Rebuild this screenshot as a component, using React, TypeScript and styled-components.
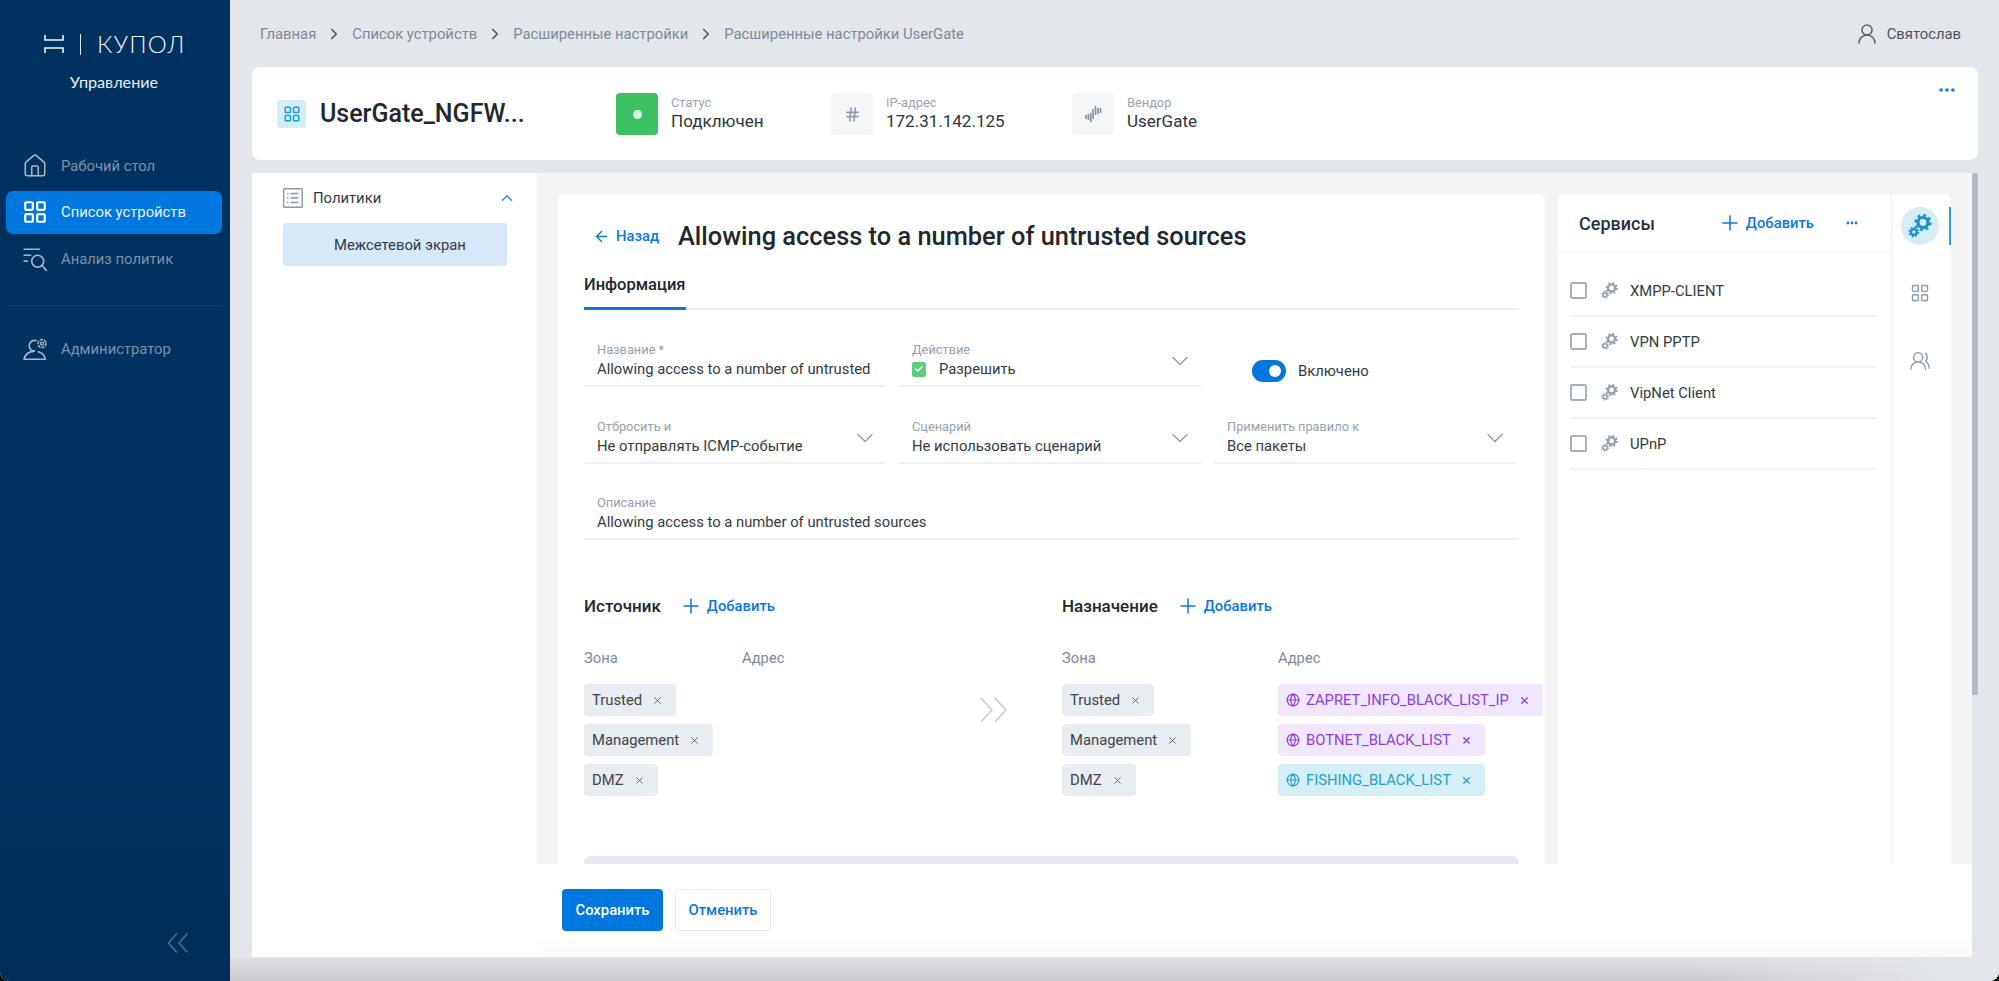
import React from "react";
import styled, { createGlobalStyle } from "styled-components";
import { ChevronDown, ChevronRight, ChevronUp, Check, Globe, Hash, House, LayoutGrid, ArrowLeft, Plus, Ellipsis, X, UserRound, UsersRound } from "lucide-react";

const Global = createGlobalStyle`
  html, body { margin: 0; padding: 0; background: #0b0b0d; }
  body { font-family: Roboto, "Noto Sans", sans-serif; overflow: hidden; }
  * { box-sizing: border-box; }
`;

const Frame = styled.div`
  width: 1999px; height: 981px; display: flex; overflow: hidden;
  border-radius: 0 0 9px 9px; background: #e3e6eb; color: #23282e;
`;
const Sidebar = styled.aside`
  width: 230px; flex: none; display: flex; flex-direction: column; padding: 0 8px 28px 6px;
  background: linear-gradient(#01325f 80%, #012e58);
`;
const LogoRow = styled.div`
  height: 22px; margin-top: 33px; display: flex; align-items: center; padding-left: 38px; color: #fff;
`;
const LogoBar = styled.span`
  width: 1px; height: 21px; background: #dfe6ee; margin: 0 16px;
`;
const LogoText = styled.span`
  font-family: Lato, sans-serif; font-weight: 300; font-size: 24px; letter-spacing: 1.2px; line-height: 22px; color: #f3f6f9;
`;
const LogoSub = styled.div`
  margin-top: 16px; margin-bottom: 51px; text-align: center; font-family: Lato, sans-serif; font-weight: 400; font-size: 16.2px; line-height: 22px; color: #e8edf2;
`;
const NavItem = styled.div<{ $active?: boolean }>`
  height: 43px; margin-bottom: 3.5px; display: flex; align-items: center; gap: 13px; padding-left: 16px; border-radius: 7px;
  font-size: 14.8px; color: ${(p) => (p.$active ? "#e9f3fd" : "#7d91a8")};
  background: ${(p) => (p.$active ? "#0076df" : "transparent")};
  & > svg { width: 26px; height: 26px; flex: none; color: ${(p) => (p.$active ? "#fff" : "#a9b6c5")}; }
`;
const NavRule = styled.div`
  height: 1px; margin: 21px 0 22px; background: #15426c;
`;
const Collapse = styled.div`
  margin-top: auto; display: flex; justify-content: flex-end; padding-right: 33px; color: #4f6b89;
`;
const Main = styled.main`
  flex: 1; min-width: 0; display: flex; flex-direction: column; padding: 0 21px 0 22px; position: relative;
  background: linear-gradient(to right, transparent 82%, #e3e6eb 97%), linear-gradient(#e3e6eb 957px, #dfe0e4 958px, #c8c9cd 981px);
`;
const TopBar = styled.div`
  height: 67px; flex: none; display: flex; align-items: center; justify-content: space-between; padding: 0 17px 0 8px;
`;
const Crumbs = styled.nav`
  display: flex; align-items: center; font-size: 14.8px; color: #7f8994; gap: 9px;
  & svg { color: #4f5863; width: 18px; height: 18px; }
`;
const User = styled.div`
  display: flex; align-items: center; gap: 8px; font-size: 14.8px; color: #4c545e;
  & svg { width: 24px; height: 24px; color: #59626d; }
`;
const DeviceCard = styled.section`
  height: 93px; flex: none; background: #fff; border-radius: 8px; padding: 26px 0 0 25px; display: flex; position: relative;
`;
const DeviceIcon = styled.span`
  width: 29px; height: 28px; margin-top: 7px; border-radius: 3px; background: #d5eef6; color: #17a0d8; display: grid; place-items: center; flex: none;
`;
const DeviceName = styled.h1`
  width: 296px; margin: 6px 0 0 14px; font-size: 25px; line-height: 30px; font-weight: 500; color: #22272d; flex: none;
`;
const Stat = styled.div<{ $w: number }>`
  width: ${(p) => p.$w}px; flex: none; display: flex; gap: 13px;
`;
const StatIcon = styled.span<{ $green?: boolean }>`
  width: 42px; height: 42px; border-radius: 4px; display: grid; place-items: center; color: #8e9bad;
  background: ${(p) => (p.$green ? "#3cc265" : "#f5f6f8")};
`;
const GreenDot = styled.i`
  width: 9px; height: 9px; border-radius: 50%; background: #d9f6e2;
`;
const StatLabel = styled.div`
  font-size: 12.8px; line-height: 14px; color: #9aa5b3; margin-top: 3px;
`;
const StatValue = styled.div`
  font-size: 17px; line-height: 20px; color: #2d3339; margin-top: 1px;
`;
const CornerDots = styled.span`
  position: absolute; right: 21px; top: 13px; color: #0d78dc; display: flex;
`;
const Workspace = styled.div`
  height: 784px; flex: none; margin-top: 13px; display: flex; position: relative; overflow: hidden;
`;
const LeftPanel = styled.div`
  width: 285px; flex: none; background: #fff; padding: 14px 30px 0 31px;
`;
const PolicyHead = styled.div`
  height: 22px; display: flex; align-items: center; font-size: 14.8px; color: #343a41; gap: 10px;
  & svg:first-child { width: 20px; height: 20px; color: #8e97a4; }
  & svg:last-child { margin-left: auto; margin-right: -9px; color: #2a8fdc; width: 18px; height: 18px; }
`;
const PolicyItem = styled.div`
  height: 43px; margin-top: 14px; padding-left: 10px; border-radius: 3px; background: #d6e9fb; display: grid; place-items: center; font-size: 14.8px; color: #343a41;
`;
const Middle = styled.div`
  flex: 1; min-width: 0; display: flex; gap: 13px; padding: 21px 21px 0; background: #f4f4f4;
`;
const ScrollTrack = styled.div`
  width: 6px; flex: none;
`;
const ScrollThumb = styled.div`
  height: 522px; background: #b3bac6; border-radius: 3px 3px 0 0;
`;
const FormCard = styled.section`
  width: 987px; flex: none; background: #fff; border-radius: 6px 6px 0 0; padding: 26px 26px 0; height: 800px;
`;
const TitleRow = styled.div`
  height: 32px; display: flex; align-items: center; padding-left: 9px;
`;
const BackLink = styled.a`
  display: flex; align-items: center; gap: 6px; font-size: 14.8px; font-weight: 500; color: #0d78dc; width: 85px;
  & svg { width: 17px; height: 17px; }
`;
const Title = styled.h2`
  margin: 0; font-size: 25.4px; font-weight: 500; color: #22272d; line-height: 32px; white-space: nowrap;
`;
const Tabs = styled.div`
  margin-top: 16px; height: 42px; border-bottom: 2px solid #eceff3;
`;
const Tab = styled.div`
  width: 102px; height: 42px; line-height: 34px; font-size: 16.5px; font-weight: 500; color: #22272d; border-bottom: 3px solid #0d78dc; white-space: nowrap;
`;
const FieldGrid = styled.div`
  margin-top: 32px; display: grid; grid-template-columns: repeat(3, 302px); column-gap: 13px; row-gap: 31.5px; width: 935px;
`;
const Field = styled.div<{ $wide?: boolean }>`
  height: 45px; padding: 0 13px; border-bottom: 2px solid #eef0f4; position: relative; ${(p) => p.$wide && "grid-column: 1 / -1; margin-right: -3px;"}
`;
const FieldLabel = styled.div`
  font-size: 12.8px; line-height: 14px; margin-top: 1px; color: #97a1ae;
`;
const FieldValue = styled.div`
  font-size: 14.8px; line-height: 20px; margin-top: 2px; color: #343a41; display: flex; align-items: center; gap: 13px; white-space: nowrap;
`;
const Caret = styled(ChevronDown)`
  position: absolute; right: 7px; top: 5px; width: 28px; height: 28px; color: #8b98a8; stroke-width: 1.1;
`;
const CheckBox = styled.span`
  width: 14px; height: 15px; border-radius: 2px; background: #57cf7c; color: #fff; display: grid; place-items: center;
`;
const ToggleCell = styled.div`
  display: flex; align-items: center; gap: 12px; padding: 13px 0 0 38px; font-size: 14.8px; color: #343a41;
`;
const Toggle = styled.span`
  width: 34px; height: 22px; border-radius: 11px; background: #0076df; display: flex; align-items: center; justify-content: flex-end; padding-right: 5px;
`;
const Knob = styled.i`
  width: 12px; height: 12px; border-radius: 50%; background: #fff;
`;
const Routes = styled.div`
  margin-top: 50px; display: flex;
`;
const RouteColumn = styled.div<{ $w: number }>`
  width: ${(p) => p.$w}px; flex: none;
`;
const RouteHead = styled.div`
  height: 32px; display: flex; align-items: center; font-size: 17px; font-weight: 500; color: #22272d;
`;
const AddLink = styled.a`
  display: flex; align-items: center; gap: 4px; margin-left: 18px; font-size: 14.8px; font-weight: 500; color: #0d78dc;
  & svg { width: 24px; height: 24px; }
`;
const Columns = styled.div`
  display: flex; margin-top: 26px;
`;
const Col = styled.div<{ $w: number }>`
  width: ${(p) => p.$w}px; flex: none; display: flex; flex-direction: column; align-items: flex-start; gap: 8px;
`;
const ColHead = styled.div`
  font-size: 14.8px; line-height: 20px; color: #7f8994; margin-bottom: 8px;
`;
const tone = {
  grey: ["#e9ecf0", "#3d444c", "#59626d"],
  purple: ["#f1e7fd", "#8a3fe0", "#7c35d4"],
  teal: ["#d5eff6", "#269fc9", "#1f93bd"],
};
const Chip = styled.span<{ $t: keyof typeof tone }>`
  height: 32px; display: inline-flex; align-items: center; gap: 8px; border-radius: 4px; font-size: 14.8px; white-space: nowrap;
  background: ${(p) => tone[p.$t][0]}; color: ${(p) => tone[p.$t][1]};
  padding: 0 13px 0 8px;
  & svg.close { width: 11px; height: 11px; margin-left: 2px; color: ${(p) => tone[p.$t][2]}; }
  & svg.globe { width: 14px; height: 14px; margin-right: -2px; }
`;
const Flow = styled.div`
  width: 82px; flex: none; padding-top: 107px; color: #c1c8d0;
`;
const GreyBlock = styled.div`
  margin-top: 60px; height: 60px; background: #e7e9ed; border-radius: 6px 6px 0 0; width: 935px;
`;
const ServicesCard = styled.section`
  flex: 1; min-width: 0; background: #fff; border-radius: 6px 6px 0 0; display: flex; height: 800px;
`;
const ServicesMain = styled.div`
  flex: 1; min-width: 0; border-right: 1px solid #f0f1f4;
`;
const ServicesHead = styled.div`
  height: 59px; display: flex; align-items: center; padding: 0 18px 0 21px; border-bottom: 1px solid #f0f1f4;
`;
const ServicesTitle = styled.h3`
  margin: 0; font-size: 18px; font-weight: 500; color: #2a3036; flex: 1;
`;
const ServiceAdd = styled(AddLink)`
  margin: 0 31px 0 0;
`;
const BlueDots = styled.span`
  color: #0d78dc; display: flex; width: 14px; justify-content: center; margin-right: 14px;
`;
const ServiceList = styled.div`
  padding: 13px 14px 0 12px;
`;
const Service = styled.div`
  height: 51px; display: flex; align-items: center; border-bottom: 2px solid #f2f3f6; font-size: 14.8px; color: #343a41;
`;
const Box = styled.span`
  width: 17px; height: 17px; border: 2px solid #a6b1bf; border-radius: 2px; margin-right: 14px; flex: none;
`;
const ServiceName = styled.span`
  margin-left: 12px;
`;
const Rail = styled.div`
  width: 59px; flex: none; display: flex; flex-direction: column; align-items: center; padding: 13px 3px 0 0; gap: 38px; color: #8e9bad; position: relative;
`;
const RailActive = styled.span`
  width: 38px; height: 38px; border-radius: 50%; background: #d5eef6; color: #1d93c3; display: grid; place-items: center;
  &::after { content: ""; position: absolute; right: 0; top: 13px; width: 2px; height: 38px; background: #2ba3cf; }
`;
const RailUsers = styled(UsersRound)`
  width: 22px; height: 22px; margin-top: 9px; stroke-width: 1.5;
`;
const Footer = styled.div`
  position: absolute; left: 285px; right: 6px; bottom: 0; height: 93px; background: linear-gradient(#fff 80%, #f9f9fa); display: flex; gap: 12px; padding: 25px 0 0 25px;
`;
const SaveButton = styled.button`
  width: 101px; height: 42px; border: 0; border-radius: 4px; background: #0076df; color: #fff; font: 500 14.8px Roboto, sans-serif;
`;
const CancelButton = styled.button`
  width: 96px; height: 42px; border: 1px solid #e8ebef; border-radius: 3px; background: #fff; color: #0d78dc; font: 500 14.8px Roboto, sans-serif;
`;

const LogoMark = () => (
  <svg width="20" height="18" viewBox="0 0 20 18" fill="none" stroke="#f3f6f9" strokeWidth="1.6">
    <path d="M1 0v5h18V0M1 18v-5h18v5" />
  </svg>
);
const Gears = ({ size = 18, color = "currentColor" }: { size?: number; color?: string }) => (
  <svg width={size} height={size} viewBox="0 0 24 24" fill="none" stroke={color}>
    <circle cx="15" cy="8.5" r="5" strokeWidth="3.2" />
    <circle cx="15" cy="8.5" r="7.4" strokeWidth="2.4" strokeDasharray="2.9 2.9" />
    <circle cx="5.8" cy="18" r="2.8" strokeWidth="2.2" />
    <circle cx="5.8" cy="18" r="4.5" strokeWidth="1.8" strokeDasharray="1.9 1.6" />
  </svg>
);
const AnalysisIcon = () => (
  <svg viewBox="0 0 24 24" fill="none" stroke="currentColor" strokeWidth="1.5" strokeLinecap="round">
    <path d="M2 3h14M2 8.5h6M2 14h3" />
    <circle cx="14.5" cy="14" r="5.5" />
    <path d="M18.5 18l4 4.5" />
  </svg>
);
const AdminIcon = () => (
  <svg viewBox="0 0 24 24" fill="none" stroke="currentColor" strokeWidth="1.5" strokeLinecap="round">
    <path d="M13 4.2A5 5 0 1 0 12 14c-5 0-9.5 2.6-10 7.5h19.5C21 18 18.5 15.6 15 14.6" />
    <circle cx="18.5" cy="7" r="1.4" strokeWidth="1.2" />
    <circle cx="18.5" cy="7" r="3.7" strokeWidth="1.4" strokeDasharray="1.9 1.95" />
  </svg>
);
const PolicyIcon = () => (
  <svg viewBox="0 0 20 20" fill="none" stroke="currentColor" strokeWidth="1.4">
    <rect x="0.7" y="0.7" width="18.6" height="18.6" rx="1" />
    <path d="M7.5 5.5h8M7.5 10h8M7.5 14.5h8M4 5.5h1.5M4 10h1.5M4 14.5h1.5" />
  </svg>
);
const Wave = () => (
  <svg width="17" height="17" viewBox="0 0 17 17" stroke="#7d8ea3" strokeWidth="1.6">
    <path d="M8 3v7M10.5 0v9M13 2v6M15.5 2v5M1 9v4M3.4 8v6M5.8 7v9M8.2 10v3" />
  </svg>
);
const DoubleLeft = () => (
  <svg width="22" height="20" viewBox="0 0 22 20" fill="none" stroke="currentColor" strokeWidth="1.6">
    <path d="M10 0.5 1.5 10l8.5 9.5M20.5 0.5 12 10l8.5 9.5" />
  </svg>
);
const DoubleRight = () => (
  <svg width="28" height="26" viewBox="0 0 28 26" fill="none" stroke="currentColor" strokeWidth="1.3">
    <path d="M1 1l11 12L1 25M15 1l11 12-11 12" />
  </svg>
);

const zones = ["Trusted", "Management", "DMZ"];
const ZoneChips = () => (
  <>
    {zones.map((z) => (
      <Chip $t="grey" key={z}>{z}<X className="close" strokeWidth={2} /></Chip>
    ))}
  </>
);
const addresses: { t: string; c: "purple" | "teal" }[] = [
  { t: "ZAPRET_INFO_BLACK_LIST_IP", c: "purple" },
  { t: "BOTNET_BLACK_LIST", c: "purple" },
  { t: "FISHING_BLACK_LIST", c: "teal" },
];
const services = ["XMPP-CLIENT", "VPN PPTP", "VipNet Client", "UPnP"];

export default function App() {
  return (
    <Frame>
      <Global />
      <Sidebar>
        <LogoRow><LogoMark /><LogoBar /><LogoText>КУПОЛ</LogoText></LogoRow>
        <LogoSub>Управление</LogoSub>
        <NavItem><House strokeWidth={1.4} />Рабочий стол</NavItem>
        <NavItem $active><LayoutGrid strokeWidth={2} />Список устройств</NavItem>
        <NavItem><AnalysisIcon />Анализ политик</NavItem>
        <NavRule />
        <NavItem><AdminIcon />Администратор</NavItem>
        <Collapse><DoubleLeft /></Collapse>
      </Sidebar>
      <Main>
        <TopBar>
          <Crumbs>
            <span>Главная</span><ChevronRight strokeWidth={2.2} />
            <span>Список устройств</span><ChevronRight strokeWidth={2.2} />
            <span>Расширенные настройки</span><ChevronRight strokeWidth={2.2} />
            <span>Расширенные настройки UserGate</span>
          </Crumbs>
          <User><UserRound strokeWidth={1.5} />Святослав</User>
        </TopBar>
        <DeviceCard>
          <DeviceIcon><LayoutGrid size={18} strokeWidth={2} /></DeviceIcon>
          <DeviceName>UserGate_NGFW...</DeviceName>
          <Stat $w={215}>
            <StatIcon $green><GreenDot /></StatIcon>
            <div><StatLabel>Статус</StatLabel><StatValue>Подключен</StatValue></div>
          </Stat>
          <Stat $w={241}>
            <StatIcon><Hash size={17} strokeWidth={2.2} /></StatIcon>
            <div><StatLabel>IP-адрес</StatLabel><StatValue>172.31.142.125</StatValue></div>
          </Stat>
          <Stat $w={200}>
            <StatIcon><Wave /></StatIcon>
            <div><StatLabel>Вендор</StatLabel><StatValue>UserGate</StatValue></div>
          </Stat>
          <CornerDots><Ellipsis size={20} strokeWidth={2.4} /></CornerDots>
        </DeviceCard>
        <Workspace>
          <LeftPanel>
            <PolicyHead><PolicyIcon />Политики<ChevronUp strokeWidth={2} /></PolicyHead>
            <PolicyItem>Межсетевой экран</PolicyItem>
          </LeftPanel>
          <Middle>
            <FormCard>
              <TitleRow>
                <BackLink><ArrowLeft strokeWidth={2} />Назад</BackLink>
                <Title>Allowing access to a number of untrusted sources</Title>
              </TitleRow>
              <Tabs><Tab>Информация</Tab></Tabs>
              <FieldGrid>
                <Field><FieldLabel>Название *</FieldLabel><FieldValue>Allowing access to a number of untrusted</FieldValue></Field>
                <Field>
                  <FieldLabel>Действие</FieldLabel>
                  <FieldValue><CheckBox><Check size={10} strokeWidth={3.5} /></CheckBox>Разрешить</FieldValue>
                  <Caret />
                </Field>
                <ToggleCell><Toggle><Knob /></Toggle>Включено</ToggleCell>
                <Field><FieldLabel>Отбросить и</FieldLabel><FieldValue>Не отправлять ICMP-событие</FieldValue><Caret /></Field>
                <Field><FieldLabel>Сценарий</FieldLabel><FieldValue>Не использовать сценарий</FieldValue><Caret /></Field>
                <Field><FieldLabel>Применить правило к</FieldLabel><FieldValue>Все пакеты</FieldValue><Caret /></Field>
                <Field $wide><FieldLabel>Описание</FieldLabel><FieldValue>Allowing access to a number of untrusted sources</FieldValue></Field>
              </FieldGrid>
              <Routes>
                <RouteColumn $w={396}>
                  <RouteHead>Источник<AddLink><Plus strokeWidth={1.5} />Добавить</AddLink></RouteHead>
                  <Columns>
                    <Col $w={158}><ColHead>Зона</ColHead><ZoneChips /></Col>
                    <Col $w={200}><ColHead>Адрес</ColHead></Col>
                  </Columns>
                </RouteColumn>
                <Flow><DoubleRight /></Flow>
                <RouteColumn $w={500}>
                  <RouteHead>Назначение<AddLink><Plus strokeWidth={1.5} />Добавить</AddLink></RouteHead>
                  <Columns>
                    <Col $w={216}><ColHead>Зона</ColHead><ZoneChips /></Col>
                    <Col $w={280}>
                      <ColHead>Адрес</ColHead>
                      {addresses.map((a) => (
                        <Chip $t={a.c} key={a.t}><Globe className="globe" strokeWidth={2} />{a.t}<X className="close" strokeWidth={2.4} /></Chip>
                      ))}
                    </Col>
                  </Columns>
                </RouteColumn>
              </Routes>
              <GreyBlock />
            </FormCard>
            <ServicesCard>
              <ServicesMain>
                <ServicesHead>
                  <ServicesTitle>Сервисы</ServicesTitle>
                  <ServiceAdd><Plus strokeWidth={1.5} />Добавить</ServiceAdd>
                  <BlueDots><Ellipsis size={22} strokeWidth={2.8} /></BlueDots>
                </ServicesHead>
                <ServiceList>
                  {services.map((s) => (
                    <Service key={s}><Box /><Gears size={17} color="#93a0b1" /><ServiceName>{s}</ServiceName></Service>
                  ))}
                </ServiceList>
              </ServicesMain>
              <Rail>
                <RailActive><Gears size={24} /></RailActive>
                <LayoutGrid size={20} strokeWidth={1.7} />
                <RailUsers />
              </Rail>
            </ServicesCard>
          </Middle>
          <ScrollTrack><ScrollThumb /></ScrollTrack>
          <Footer>
            <SaveButton>Сохранить</SaveButton>
            <CancelButton>Отменить</CancelButton>
          </Footer>
        </Workspace>
      </Main>
    </Frame>
  );
}
